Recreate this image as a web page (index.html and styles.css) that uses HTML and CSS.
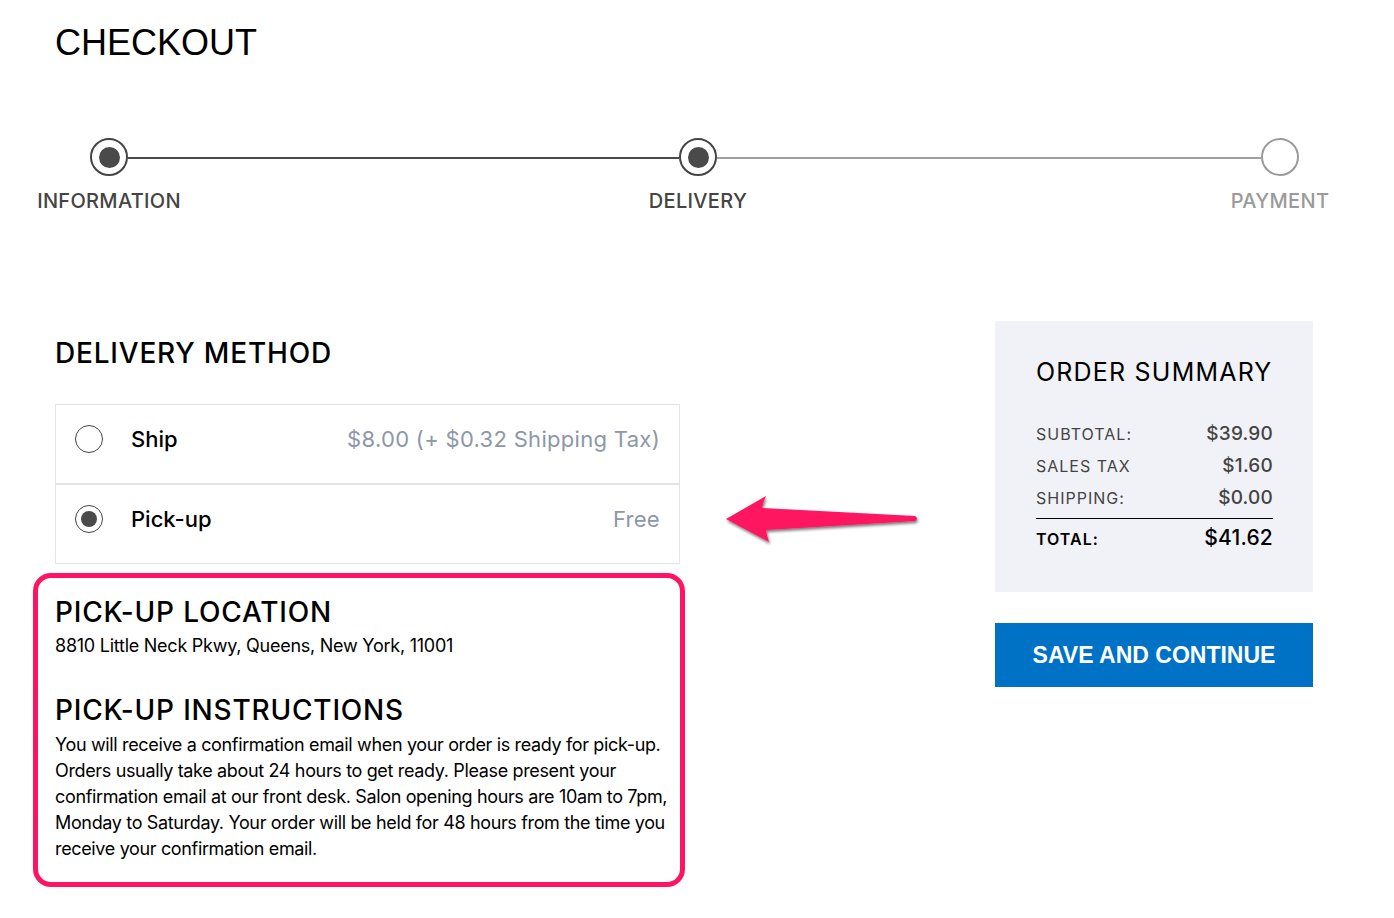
FILE: index.html
```html
<!DOCTYPE html>
<html lang="en">
<head>
<meta charset="utf-8">
<title>Checkout</title>
<link rel="stylesheet" href="styles.css">
</head>
<body>
<h1 class="page-title">CHECKOUT</h1>

<div class="stepper">
  <div class="step done"><span class="step-dot"></span></div>
  <div class="step-line dark"></div>
  <div class="step done"><span class="step-dot"></span></div>
  <div class="step-line light"></div>
  <div class="step todo"><span class="step-dot"></span></div>
  <div class="step-label">INFORMATION</div>
  <div></div>
  <div class="step-label">DELIVERY</div>
  <div></div>
  <div class="step-label muted">PAYMENT</div>
</div>

<main class="main">
  <section class="left">
    <h2 class="section-title">DELIVERY METHOD</h2>
    <div class="options">
      <label class="option">
        <span class="radio"></span>
        <span class="option-name">Ship</span>
        <span class="option-price">$8.00 (+ $0.32 Shipping Tax)</span>
      </label>
      <label class="option">
        <span class="radio checked"></span>
        <span class="option-name">Pick-up</span>
        <span class="option-price">Free</span>
      </label>
    </div>
    <div class="pickup">
      <h3 class="section-title">PICK-UP LOCATION</h3>
      <p class="address">8810 Little Neck Pkwy, Queens, New York, 11001</p>
      <h3 class="section-title instr-title">PICK-UP INSTRUCTIONS</h3>
      <p class="instructions">You will receive a confirmation email when your order is ready for pick-up. Orders usually take about 24 hours to get ready. Please present your confirmation email at our front desk. Salon opening hours are 10am to 7pm, Monday to Saturday. Your order will be held for 48 hours from the time you receive your confirmation email.</p>
    </div>
  </section>

  <aside class="right">
    <div class="summary">
      <h2 class="summary-title">ORDER SUMMARY</h2>
      <div class="sum-row"><span class="sum-label">SUBTOTAL:</span><span class="sum-value">$39.90</span></div>
      <div class="sum-row"><span class="sum-label">SALES TAX</span><span class="sum-value">$1.60</span></div>
      <div class="sum-row"><span class="sum-label">SHIPPING:</span><span class="sum-value">$0.00</span></div>
      <div class="sum-row total"><span class="sum-label">TOTAL:</span><span class="sum-value">$41.62</span></div>
    </div>
    <button class="save-btn" type="button">SAVE AND CONTINUE</button>
  </aside>
</main>

<svg class="arrow" width="210" height="62" viewBox="0 0 210 62" aria-hidden="true">
  <defs>
    <filter id="sh" x="-10%" y="-30%" width="120%" height="160%">
      <feDropShadow dx="1" dy="2" stdDeviation="1.6" flood-color="#000" flood-opacity="0.55"/>
    </filter>
  </defs>
  <path d="M6 29 L46 6 Q43 12 42 18 L195 26 Q199 28.5 195 31 L46 40 Q47 46 49 52 Z" fill="#ff1461" filter="url(#sh)"/>
</svg>
</body>
</html>
```

FILE: styles.css
```css
* { box-sizing: border-box; }

body {
  margin: 0;
  background: #fff;
  font-family: Inter, "Noto Sans", sans-serif;
  color: #000;
}

.page-title {
  margin: 0;
  padding: 22px 0 0 55px;
  font-family: "Liberation Sans", Arial, sans-serif;
  font-weight: 400;
  font-size: 36px;
  line-height: 42px;
  color: #000;
}

/* stepper */
.stepper {
  display: grid;
  grid-template-columns: 38px 551fr 38px 544fr 38px;
  margin: 74px 0 0 90px;
  width: 1209px;
  row-gap: 13px;
  align-items: center;
}

.step-dot {
  display: flex;
  width: 38px;
  height: 38px;
  border-radius: 50%;
  border: 2px solid #444;
  align-items: center;
  justify-content: center;
}

.step.done .step-dot::after {
  content: "";
  width: 21px;
  height: 21px;
  border-radius: 50%;
  background: #4a4a4a;
}

.step.todo .step-dot {
  border-color: #9a9a9a;
}

.step-line {
  height: 2px;
  margin-top: 2px;
}
.step-line.dark { background: #4a4a4a; }
.step-line.light { background: #a0a0a0; }

.step-label {
  width: max-content;
  margin-left: 50%;
  transform: translateX(-50%);
  font-size: 20px;
  line-height: 24px;
  font-weight: 500;
  letter-spacing: 0.3px;
  color: #444;
}
.step-label.muted { color: #9a9a9a; }

/* main */
.main {
  display: flex;
  margin-top: 108px;
  padding-left: 55px;
  gap: 315px;
}

.left {
  width: 625px;
  flex: none;
}

.section-title {
  margin: 0;
  font-size: 28px;
  line-height: 34px;
  font-weight: 500;
  letter-spacing: 0.8px;
}

.left > .section-title {
  margin-top: 15px;
}

.options {
  margin-top: 34px;
}

.option {
  display: flex;
  align-items: center;
  height: 80px;
  padding: 20px 19px 31px 19px;
  border: 1px solid #e4e4e4;
}

.radio {
  flex: none;
  display: flex;
  align-items: center;
  justify-content: center;
  width: 28px;
  height: 28px;
  border-radius: 50%;
  border: 1.6px solid #444;
}
.radio.checked::after {
  content: "";
  width: 16px;
  height: 16px;
  border-radius: 50%;
  background: #4a4a4a;
}

.option-name {
  margin-left: 28px;
  font-size: 22px;
  font-weight: 500;
  line-height: 28px;
  color: #000;
}

.option-price {
  margin-left: auto;
  font-size: 22px;
  line-height: 28px;
  color: #8d97a8;
  letter-spacing: 0.3px;
}

.pickup {
  margin: 9px 0 0 -22px;
  width: 652px;
  border: 5px solid #ff1461;
  border-radius: 18px;
  padding: 17px 0 20px 17px;
}

.address {
  margin: 4px 0 0;
  font-size: 18px;
  line-height: 26px;
  letter-spacing: -0.25px;
}

.instr-title {
  margin-top: 34px;
}

.instructions {
  margin: 5px 0 0;
  font-size: 18px;
  line-height: 26px;
  letter-spacing: -0.35px;
  width: 625px;
}

/* summary */
.right {
  width: 318px;
  flex: none;
}

.summary {
  background: #f1f2f7;
  padding: 36px 40px 34px 41px;
}

.summary-title {
  margin: 0 0 31px;
  font-size: 25px;
  line-height: 30px;
  font-weight: 400;
  letter-spacing: 1.2px;
}

.sum-row {
  display: flex;
  justify-content: space-between;
  align-items: baseline;
  line-height: 32px;
}

.sum-label {
  font-size: 16px;
  letter-spacing: 1px;
  color: #444;
}

.sum-value {
  font-size: 19px;
  font-weight: 500;
  color: #444;
  letter-spacing: 0.2px;
}

.sum-row.total {
  margin-top: 4px;
  padding-top: 0;
  border-top: 1px solid #000;
  line-height: 38px;
}
.sum-row.total .sum-label {
  font-weight: 600;
  color: #000;
}
.sum-row.total .sum-value {
  font-size: 21px;
  color: #000;
}

.save-btn {
  display: block;
  width: 100%;
  height: 64px;
  margin-top: 31px;
  border: 0;
  background: #0072c6;
  color: #fff;
  font-family: "Liberation Sans", Arial, sans-serif;
  font-weight: 700;
  font-size: 23px;
  letter-spacing: 0;
  cursor: pointer;
}

/* annotation arrow overlay */
.arrow {
  position: absolute;
  left: 720px;
  top: 490px;
}
```
